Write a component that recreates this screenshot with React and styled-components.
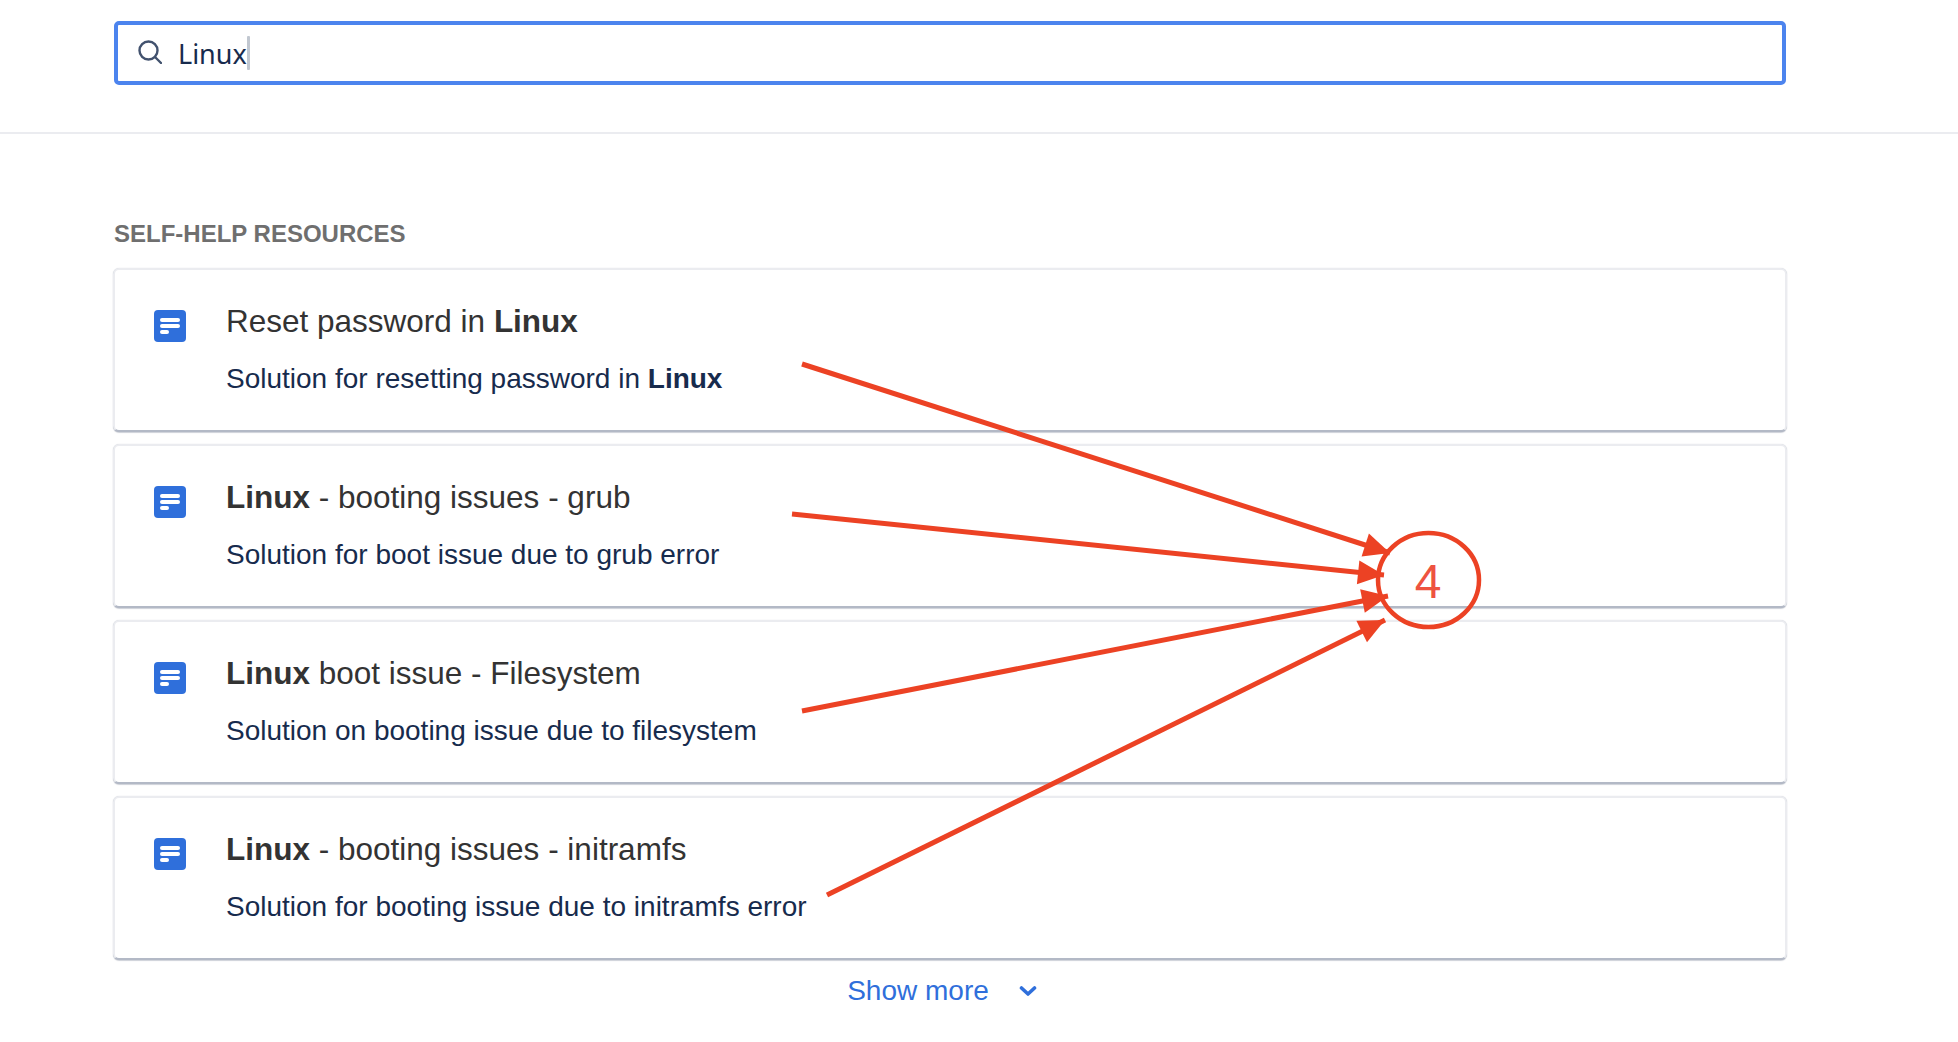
import React from 'react'
import styled, { createGlobalStyle } from 'styled-components'

const GlobalStyle = createGlobalStyle`
	html, body {
		margin: 0;
		background: #FFFFFF;
		font-family: "Liberation Sans", Arial, sans-serif;
	}
	#root {
		position: relative;
	}
`

const resources = [
	{ id: 1, before: 'Reset password in ', strong: 'Linux', after: '', text: 'Solution for resetting password in ', textStrong: 'Linux' },
	{ id: 2, before: '', strong: 'Linux', after: ' - booting issues - grub', text: 'Solution for boot issue due to grub error' },
	{ id: 3, before: '', strong: 'Linux', after: ' boot issue - Filesystem', text: 'Solution on booting issue due to filesystem' },
	{ id: 4, before: '', strong: 'Linux', after: ' - booting issues - initramfs', text: 'Solution for booting issue due to initramfs error' },
]

const arrows = [
	{ x1: 802, y1: 364, x2: 1390, y2: 553 },
	{ x1: 792, y1: 514, x2: 1384, y2: 575 },
	{ x1: 802, y1: 711, x2: 1388, y2: 596 },
	{ x1: 827, y1: 895, x2: 1385, y2: 620 },
]

const arrowHead = ({ x1, y1, x2, y2 }) => {
	const angle = Math.atan2(y2 - y1, x2 - x1)
	const len = 26
	const half = 12
	const bx = x2 - Math.cos(angle) * len
	const by = y2 - Math.sin(angle) * len
	const nx = -Math.sin(angle) * half
	const ny = Math.cos(angle) * half
	return `${x2},${y2} ${bx + nx},${by + ny} ${bx - nx},${by - ny}`
}

const SearchIcon = () => (
	<SearchSvg viewBox="0 0 24 24" fill="none" stroke="#42526E" strokeWidth="2.4" strokeLinecap="round">
		<circle cx="10.5" cy="10.5" r="9" />
		<path d="M17 17 L23 23" />
	</SearchSvg>
)

const DocIcon = () => (
	<DocSvg viewBox="0 0 32 32">
		<rect width="32" height="32" rx="4" fill="#2F6FDB" />
		<rect x="6" y="8" width="20" height="4" rx="2" fill="#FFFFFF" />
		<rect x="6" y="14" width="20" height="4" rx="2" fill="#FFFFFF" />
		<rect x="6" y="20" width="9" height="4" rx="2" fill="#FFFFFF" />
	</DocSvg>
)

const App = () => (
	<Page>
		<GlobalStyle />
		<Header>
			<SearchBox>
				<SearchIcon />
				<SearchText>Linux</SearchText>
				<Caret />
			</SearchBox>
		</Header>
		<Main>
			<SectionLabel>SELF-HELP RESOURCES</SectionLabel>
			<CardList>
				{resources.map(item => (
					<Card key={item.id}>
						<DocIcon />
						<CardBody>
							<CardTitle>{item.before}<strong>{item.strong}</strong>{item.after}</CardTitle>
							<CardText>{item.text}{item.textStrong && <strong>{item.textStrong}</strong>}</CardText>
						</CardBody>
					</Card>
				))}
			</CardList>
			<ShowMore>
				<span>Show more</span>
				<svg width="18" height="12" viewBox="0 0 18 12" fill="none" stroke="#2F6FDB" strokeWidth="3.6" strokeLinecap="round" strokeLinejoin="round">
					<path d="M2.5 3 L9 9 L15.5 3" />
				</svg>
			</ShowMore>
		</Main>
		<Overlay viewBox="0 0 1958 1042">
			{arrows.map(arrow => (
				<g key={arrow.y1}>
					<line {...arrow} stroke="#EC4224" strokeWidth="5" />
					<polygon points={arrowHead(arrow)} fill="#EC4224" />
				</g>
			))}
			<ellipse cx="1428.5" cy="580" rx="50.5" ry="47" fill="none" stroke="#EC4224" strokeWidth="4.5" />
		</Overlay>
		<CircleLabel>4</CircleLabel>
	</Page>
)

export default App

const Page = styled.div`
	position: relative;
	height: 1042px;
	overflow: hidden;
`
const Header = styled.header`
	height: 111px;
	padding: 21px 0 0 114px;
	border-bottom: 2px solid #EBECF0;
`
const SearchBox = styled.div`
	display: flex;
	align-items: center;
	width: 1672px;
	height: 64px;
	box-sizing: border-box;
	border: 4px solid #4C84EE;
	border-radius: 5px;
	padding-left: 20px;
`
const SearchSvg = styled.svg`
	width: 24px;
	height: 24px;
	margin-right: 16px;
	margin-top: -3px;
`
const SearchText = styled.span`
	color: #172B4D;
	font-family: "Noto Sans", sans-serif;
	font-size: 27px;
`
const Caret = styled.span`
	width: 3px;
	height: 34px;
	border-radius: 1px;
	background: #C1C7D0;
`
const Main = styled.main`
	width: 1674px;
	margin-left: 113px;
`
const SectionLabel = styled.h2`
	margin: 86px 0 0 1px;
	color: #6F6F6F;
	font-size: 24px;
	font-weight: 700;
	line-height: 28px;
`
const CardList = styled.div`
	display: flex;
	flex-direction: column;
	gap: 12px;
	margin-top: 20px;
`
const Card = styled.article`
	display: flex;
	gap: 40px;
	height: 164px;
	box-sizing: border-box;
	padding: 40px 0 0 39px;
	border: 2px solid #EBECF0;
	border-bottom: 2px solid #B3B9C6;
	border-radius: 6px;
	background: #FFFFFF;
	box-shadow: 0 1px 1px rgba(9, 30, 66, 0.18), 0 0 1px rgba(9, 30, 66, 0.2);
`
const DocSvg = styled.svg`
	flex: none;
	width: 32px;
	height: 32px;
`
const CardBody = styled.div`
	display: flex;
	flex-direction: column;
	gap: 22px;
	margin-top: -7px;
`
const CardTitle = styled.div`
	color: #333333;
	font-size: 31.5px;
	line-height: 36px;
`
const CardText = styled.div`
	color: #172B4D;
	font-size: 28px;
	line-height: 36px;
`
const ShowMore = styled.div`
	display: flex;
	align-items: center;
	justify-content: center;
	gap: 30px;
	margin: 14px 0 0 -16px;
	color: #2F6FDB;
	font-size: 28px;
	line-height: 34px;
`
const Overlay = styled.svg`
	position: absolute;
	top: 0;
	left: 0;
	width: 1958px;
	height: 1042px;
	pointer-events: none;
`
const CircleLabel = styled.span`
	position: absolute;
	left: 1428px;
	top: 581px;
	transform: translate(-50%, -50%);
	color: #EE5340;
	font-family: "Liberation Sans", sans-serif;
	font-size: 48px;
`
